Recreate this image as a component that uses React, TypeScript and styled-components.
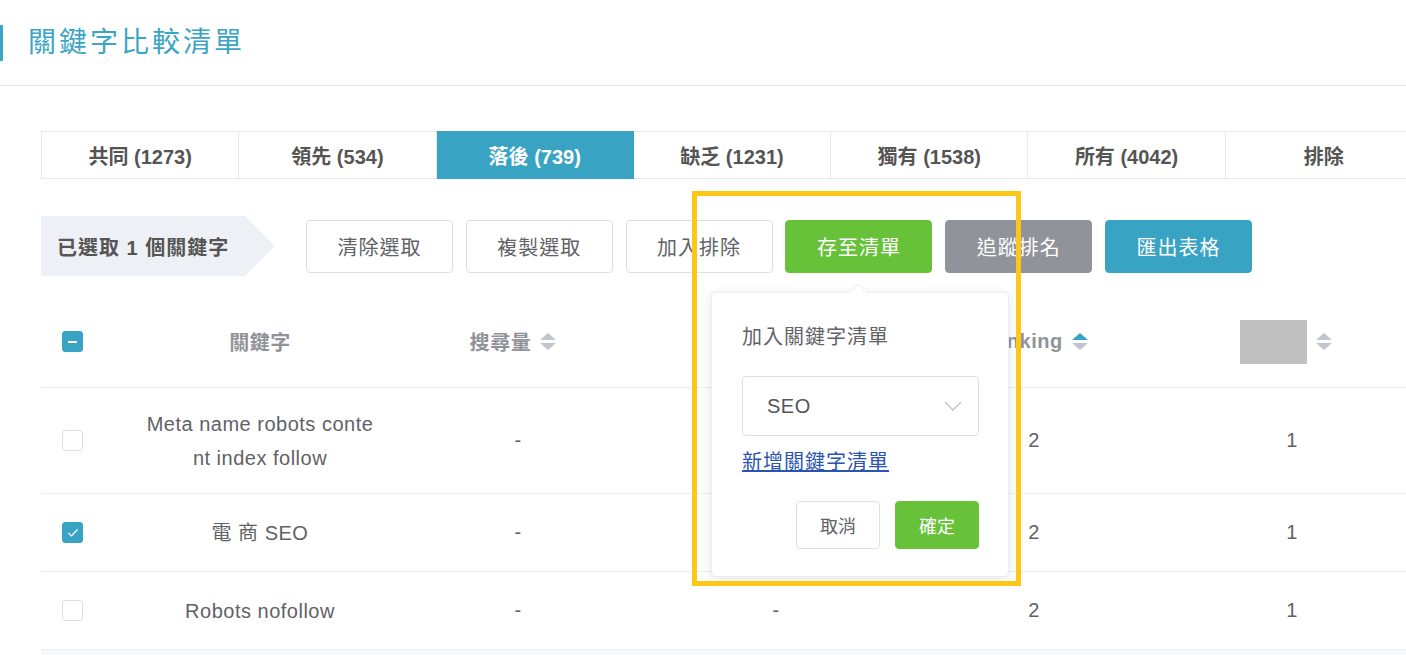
import React from 'react';
import styled, { createGlobalStyle, css } from 'styled-components';

const GlobalStyle = createGlobalStyle`
  html, body {
    margin: 0;
    padding: 0;
    background: #fff;
    overflow: hidden;
  }
  body {
    font-family: "Liberation Sans", "Noto Sans CJK TC", sans-serif;
    color: #606266;
  }
  * {
    box-sizing: border-box;
  }
`;

const Page = styled.div`
  position: relative;
  width: 1406px;
  height: 655px;
  overflow: hidden;
`;

const Header = styled.header`
  height: 86px;
  padding-top: 25px;
  border-bottom: 1px solid #e5e5ea;
`;

const Title = styled.h1`
  margin: 0;
  height: 36px;
  line-height: 36px;
  padding-left: 25px;
  border-left: 3px solid #3ba5c4;
  font-size: 28px;
  font-weight: 400;
  letter-spacing: 3px;
  color: #3ba5c4;
`;

const Content = styled.main`
  width: 1382px;
  margin-left: 41px;
  padding-top: 45px;
`;

const Tabs = styled.div`
  display: grid;
  grid-template-columns: repeat(7, 1fr);
  border-left: 1px solid #e8e8e8;
`;

const Tab = styled.div<{ $active?: boolean }>`
  height: 48px;
  display: flex;
  align-items: center;
  justify-content: center;
  border-top: 1px solid #e8e8e8;
  border-bottom: 1px solid #e8e8e8;
  border-right: 1px solid #e8e8e8;
  font-size: 20px;
  font-weight: 700;
  color: #555;
  ${(p) =>
    p.$active &&
    css`
      background: #38a3c3;
      border-color: #38a3c3;
      color: #fff;
    `}
`;

const ActionRow = styled.div`
  margin-top: 37px;
  height: 60px;
  display: flex;
  align-items: center;
`;

const SelectedLabel = styled.div`
  width: 234px;
  height: 60px;
  padding-left: 16px;
  display: flex;
  align-items: center;
  background: #edf0f5;
  clip-path: polygon(0 0, 204px 0, 234px 50%, 204px 100%, 0 100%);
  font-size: 20px;
  font-weight: 700;
  letter-spacing: 1px;
  color: #555;
`;

const ButtonGroup = styled.div`
  margin-left: 31px;
  display: flex;
  gap: 12.8px;
`;

type Tone = 'plain' | 'green' | 'gray' | 'blue';

const toneColors: Record<Tone, { bg: string; fg: string; border: string }> = {
  plain: { bg: '#fff', fg: '#606266', border: '#dcdfe6' },
  green: { bg: '#67c23a', fg: '#fff', border: '#67c23a' },
  gray: { bg: '#909399', fg: '#fff', border: '#909399' },
  blue: { bg: '#38a3c3', fg: '#fff', border: '#38a3c3' },
};

const ActionButton = styled.button<{ $tone: Tone }>`
  width: 147px;
  height: 53px;
  border-radius: 4px;
  border: 1px solid ${(p) => toneColors[p.$tone].border};
  background: ${(p) => toneColors[p.$tone].bg};
  color: ${(p) => toneColors[p.$tone].fg};
  font-family: inherit;
  font-size: 20px;
  letter-spacing: 1px;
  padding: 0;
`;

const Table = styled.div`
  margin-top: 20px;
`;

const Row = styled.div<{ $height: number }>`
  display: grid;
  grid-template-columns: 90px repeat(5, 258px);
  align-items: center;
  height: ${(p) => p.$height}px;
  border-bottom: 1px solid #ebeef5;
`;

const Cell = styled.div`
  display: flex;
  align-items: center;
  justify-content: center;
  font-size: 20px;
  letter-spacing: 0.5px;
  color: #606266;
  text-align: center;
`;

const HeadCell = styled(Cell)<{ $shift?: number }>`
  gap: 9px;
  padding-right: ${(p) => p.$shift ?? 0}px;
  font-weight: 700;
  color: #909399;
  letter-spacing: 0.5px;
`;

const CheckCell = styled.div`
  padding-left: 21px;
  display: flex;
  align-items: center;
`;

const KeywordText = styled.span`
  width: 230px;
  line-height: 34px;
  word-break: break-all;
`;

const HiddenLabel = styled.span`
  width: 67px;
  height: 44px;
  background: #c0c0c0;
`;

const Box = styled.span<{ $state: 'off' | 'on' | 'partial' }>`
  width: 21px;
  height: 21px;
  border-radius: 3px;
  display: flex;
  align-items: center;
  justify-content: center;
  border: 1px solid ${(p) => (p.$state === 'off' ? '#dcdfe6' : '#38a3c3')};
  background: ${(p) => (p.$state === 'off' ? '#fff' : '#38a3c3')};
`;

const Dash = styled.span`
  width: 9px;
  height: 2px;
  background: #fff;
`;

const TableFoot = styled.div`
  height: 40px;
  background: #f5f7fa;
`;

const Popover = styled.div`
  position: absolute;
  left: 711px;
  top: 292px;
  width: 298px;
  padding: 29px 29px 27px 30px;
  background: #fff;
  border: 1px solid #ebeef5;
  border-radius: 4px;
  box-shadow: 0 2px 12px rgba(0, 0, 0, 0.1);

  &::before {
    content: '';
    position: absolute;
    top: -7px;
    left: 140px;
    width: 12px;
    height: 12px;
    background: #fff;
    border-top: 1px solid #ebeef5;
    border-left: 1px solid #ebeef5;
    transform: rotate(45deg);
  }
`;

const PopTitle = styled.div`
  line-height: 30px;
  font-size: 20px;
  letter-spacing: 1px;
  color: #606266;
`;

const SelectBox = styled.div`
  margin-top: 24px;
  height: 60px;
  padding: 0 16px 0 24px;
  display: flex;
  align-items: center;
  justify-content: space-between;
  border: 1px solid #dcdfe6;
  border-radius: 4px;
  font-size: 20px;
  letter-spacing: 0.5px;
  color: #555;
`;

const AddLink = styled.a`
  display: inline-block;
  margin-top: 13px;
  line-height: 26px;
  font-size: 20px;
  letter-spacing: 1px;
  color: #2b54b0;
  text-decoration: underline;
`;

const PopActions = styled.div`
  margin-top: 26px;
  display: flex;
  justify-content: flex-end;
  gap: 15px;
`;

const PopButton = styled.button<{ $primary?: boolean }>`
  width: 84px;
  height: 48px;
  padding: 0;
  border-radius: 4px;
  font-family: inherit;
  font-size: 18px;
  border: 1px solid ${(p) => (p.$primary ? '#67c23a' : '#dcdfe6')};
  background: ${(p) => (p.$primary ? '#67c23a' : '#fff')};
  color: ${(p) => (p.$primary ? '#fff' : '#606266')};
`;

const Highlight = styled.div`
  position: absolute;
  left: 692px;
  top: 191px;
  width: 329px;
  height: 395px;
  border: 5px solid #fdc718;
  pointer-events: none;
`;

const SortIcon = ({ active }: { active?: boolean }) => (
  <svg width="16" height="17" viewBox="0 0 16 17">
    <polygon points="0,7 8,0 16,7" fill={active ? '#38a3c3' : '#c0c4cc'} />
    <polygon points="0,10 8,17 16,10" fill="#c0c4cc" />
  </svg>
);

const Checkbox = ({ state }: { state: 'off' | 'on' | 'partial' }) => (
  <Box $state={state}>
    {state === 'partial' && <Dash />}
    {state === 'on' && (
      <svg width="12" height="10" viewBox="0 0 12 10">
        <polyline points="1.5,5 4.5,8 10.5,1.5" fill="none" stroke="#fff" strokeWidth="1.2" />
      </svg>
    )}
  </Box>
);

const tabs = [
  { label: '共同 (1273)' },
  { label: '領先 (534)' },
  { label: '落後 (739)', active: true },
  { label: '缺乏 (1231)' },
  { label: '獨有 (1538)' },
  { label: '所有 (4042)' },
  { label: '排除' },
];

const actions: { label: string; tone: Tone }[] = [
  { label: '清除選取', tone: 'plain' },
  { label: '複製選取', tone: 'plain' },
  { label: '加入排除', tone: 'plain' },
  { label: '存至清單', tone: 'green' },
  { label: '追蹤排名', tone: 'gray' },
  { label: '匯出表格', tone: 'blue' },
];

const rows = [
  { keyword: 'Meta name robots content index follow', checked: false, volume: '-', level: '-', rank: '2', other: '1', height: 106 },
  { keyword: '電 商 SEO', checked: true, volume: '-', level: '-', rank: '2', other: '1', height: 78 },
  { keyword: 'Robots nofollow', checked: false, volume: '-', level: '-', rank: '2', other: '1', height: 78 },
];

export default function App() {
  return (
    <Page>
      <GlobalStyle />
      <Header>
        <Title>關鍵字比較清單</Title>
      </Header>

      <Content>
        <Tabs>
          {tabs.map((t) => (
            <Tab key={t.label} $active={t.active}>
              {t.label}
            </Tab>
          ))}
        </Tabs>

        <ActionRow>
          <SelectedLabel>已選取 1 個關鍵字</SelectedLabel>
          <ButtonGroup>
            {actions.map((a) => (
              <ActionButton key={a.label} $tone={a.tone}>
                {a.label}
              </ActionButton>
            ))}
          </ButtonGroup>
        </ActionRow>

        <Table>
          <Row $height={92}>
            <CheckCell>
              <Checkbox state="partial" />
            </CheckCell>
            <HeadCell>關鍵字</HeadCell>
            <HeadCell $shift={10}>
              搜尋量
              <SortIcon />
            </HeadCell>
            <HeadCell>
              <SortIcon />
            </HeadCell>
            <HeadCell>
              Ranking
              <SortIcon active />
            </HeadCell>
            <HeadCell $shift={12}>
              <HiddenLabel />
              <SortIcon />
            </HeadCell>
          </Row>
          {rows.map((r) => (
            <Row key={r.keyword} $height={r.height}>
              <CheckCell>
                <Checkbox state={r.checked ? 'on' : 'off'} />
              </CheckCell>
              <Cell>
                <KeywordText>{r.keyword}</KeywordText>
              </Cell>
              <Cell>{r.volume}</Cell>
              <Cell>{r.level}</Cell>
              <Cell>{r.rank}</Cell>
              <Cell>{r.other}</Cell>
            </Row>
          ))}
          <TableFoot />
        </Table>
      </Content>

      <Popover>
        <PopTitle>加入關鍵字清單</PopTitle>
        <SelectBox>
          SEO
          <svg width="18" height="10" viewBox="0 0 18 10">
            <polyline points="1,1 9,9 17,1" fill="none" stroke="#c0c4cc" strokeWidth="1.3" />
          </svg>
        </SelectBox>
        <AddLink>新增關鍵字清單</AddLink>
        <PopActions>
          <PopButton>取消</PopButton>
          <PopButton $primary>確定</PopButton>
        </PopActions>
      </Popover>

      <Highlight />
    </Page>
  );
}
